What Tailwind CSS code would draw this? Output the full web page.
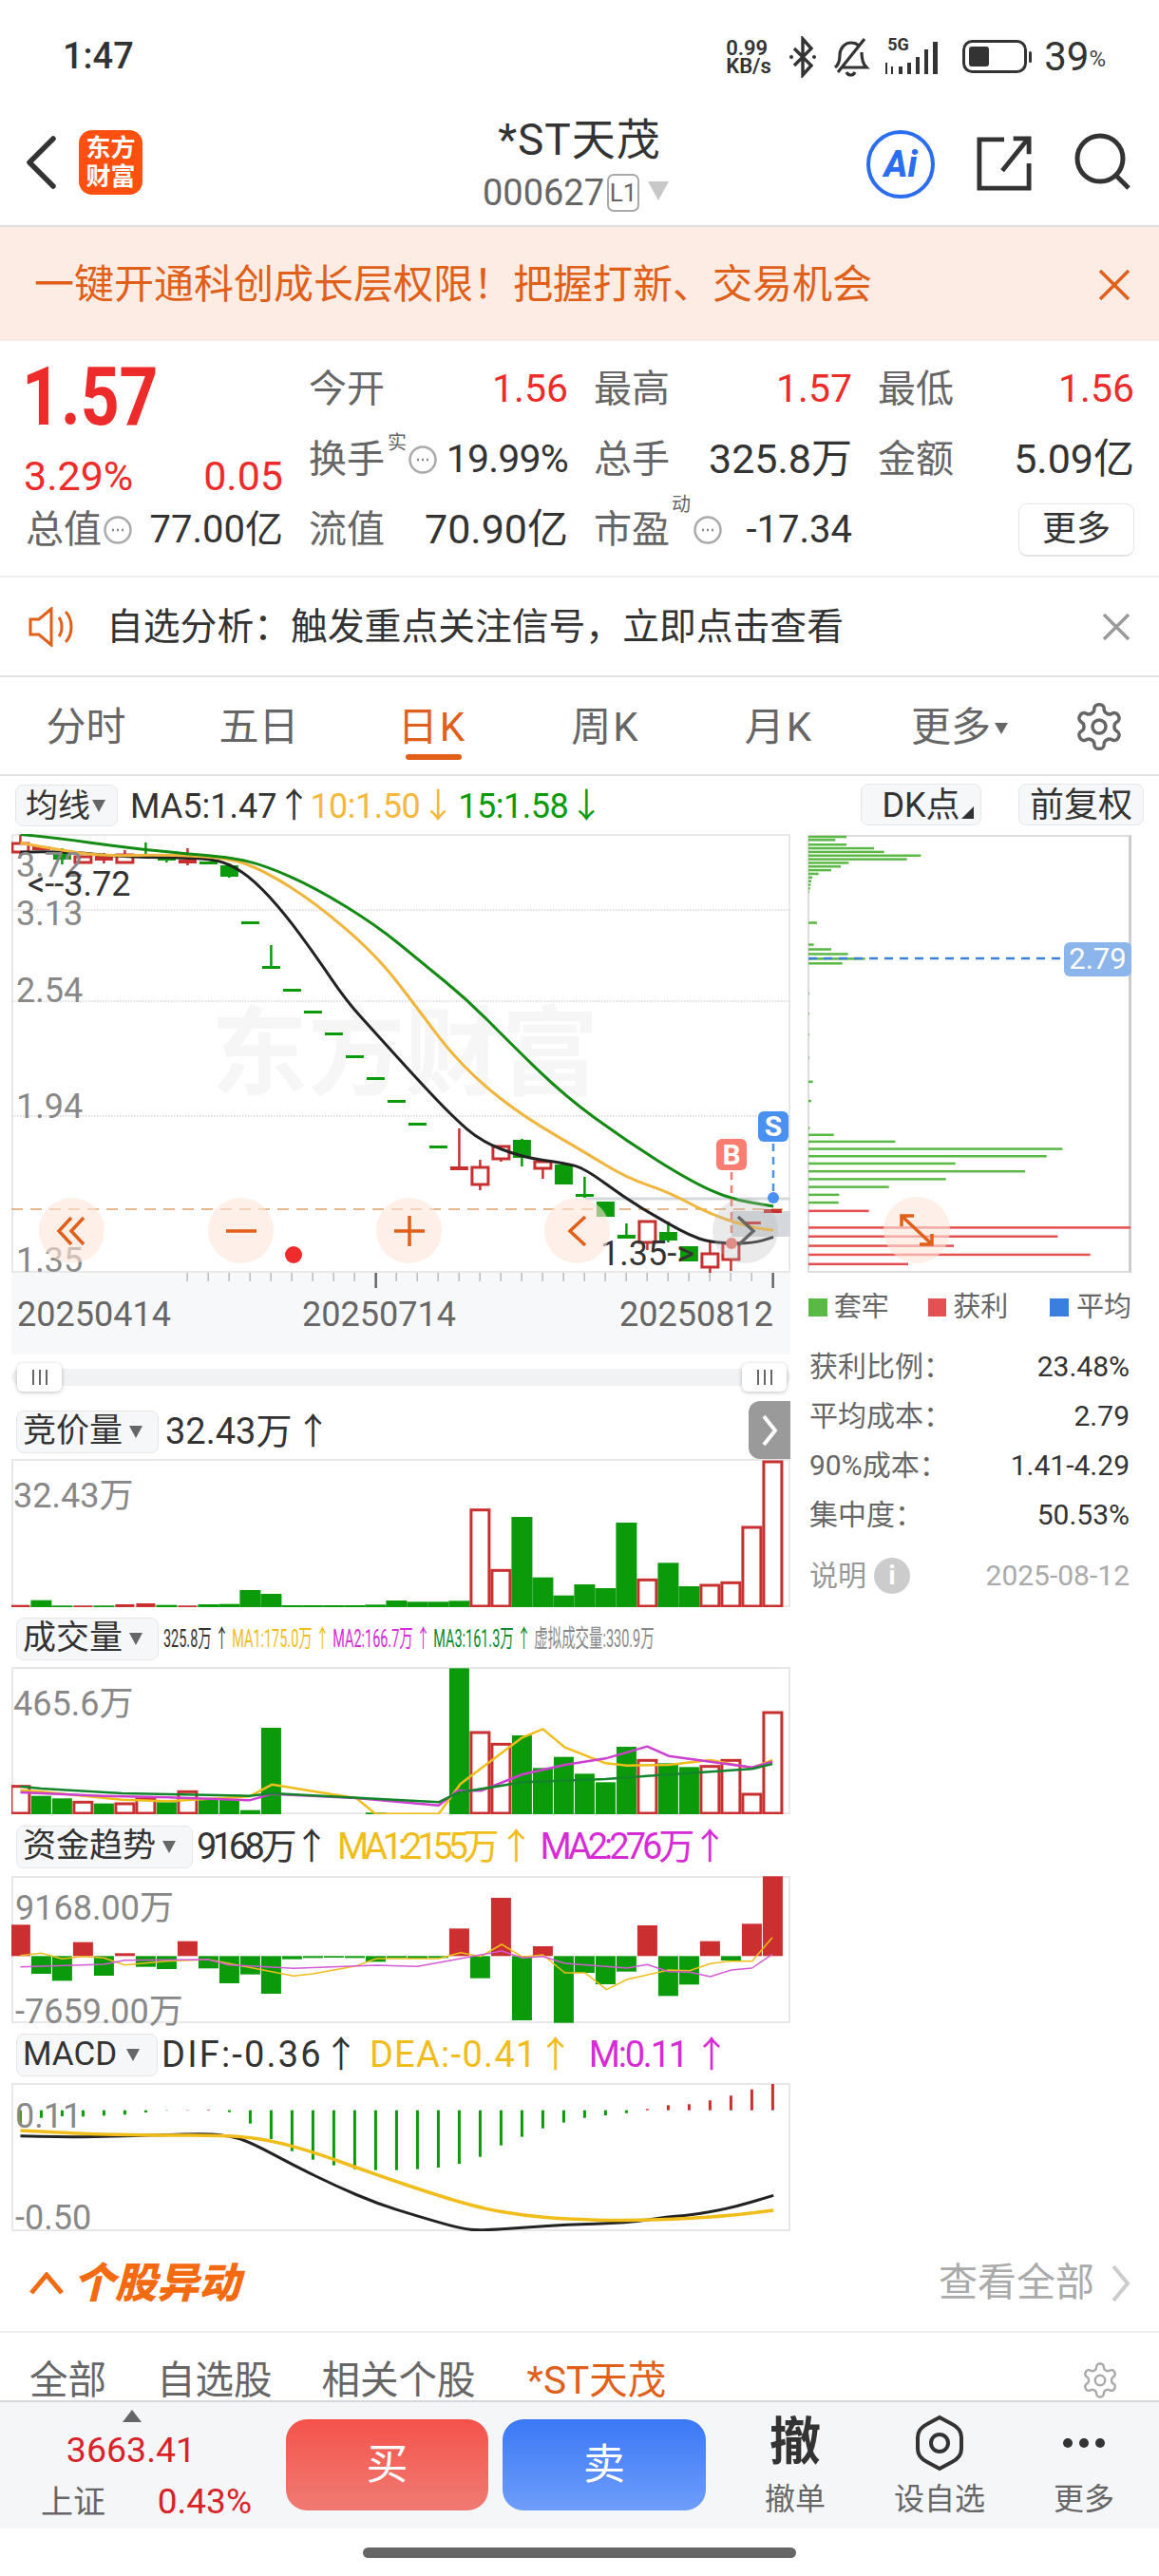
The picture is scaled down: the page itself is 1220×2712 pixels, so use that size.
<!DOCTYPE html>
<html lang="zh-CN">
<head>
<meta charset="UTF-8" />
<title>*ST天茂</title>
<script src="https://cdn.jsdelivr.net/npm/@tailwindcss/browser@4"></script>
</head>
<body class="bg-white text-[#333] font-[Roboto,'Noto_Sans_CJK_SC',sans-serif]">
<div class="w-[1220px] h-[2712px] overflow-hidden relative">

  <!-- status bar -->
  <div class="h-[105px] flex items-start pt-[36px] pl-[66px] pr-[56px] justify-between">
    <span class="text-[38px] leading-[46px] font-medium text-[#333]">1:47</span>
    <div class="flex items-center h-[48px]">
      <div class="text-[22px] leading-[19px] font-semibold w-[54px] text-[#333]">0.99<br>KB/s</div>
      <svg class="ml-[12px]" width="30" height="44" viewBox="0 0 30 44" fill="none" stroke="#333" stroke-width="3.4"><path d="M6 13l18 18-9 10V3l9 10L6 31"/><circle cx="3" cy="22" r="2" fill="#333" stroke="none"/><circle cx="27" cy="22" r="2" fill="#333" stroke="none"/></svg>
      <svg class="ml-[14px]" width="42" height="44" viewBox="0 0 42 44" fill="none" stroke="#333" stroke-width="3.2"><path d="M5 33c4-3 5-7 5-13 0-7 5-13 12-13 3 0 6 1 8 3M33 17c0 7 1 12 5 16H12M17 38c2 4 7 4 9 0M36 3L8 38"/></svg>
      <div class="ml-[14px] relative w-[68px] h-[44px]">
        <span class="absolute left-[4px] top-[-1px] text-[18px] leading-[20px] font-bold">5G</span>
        <svg class="absolute inset-0" width="68" height="44" viewBox="0 0 68 44" fill="#333"><path d="M2 28h2v12H2zM8 32h2v8H8zM16 32h4v8h-4zM25 28h4v12h-4zM34 22h4v18h-4zM43 14h4v26h-4zM52 6h5v34h-5z"/></svg>
      </div>
      <svg class="ml-[15px]" width="74" height="36" viewBox="0 0 74 36"><rect x="1.5" y="1.5" width="65" height="32" rx="9" fill="none" stroke="#333" stroke-width="3"/><rect x="7" y="7" width="21" height="21" rx="3" fill="#333"/><rect x="70" y="12" width="3" height="12" rx="1.5" fill="#333"/></svg>
      <span class="ml-[12px] text-[42px] leading-[46px] text-[#333]">39</span><span class="text-[24px] leading-[46px] mt-[4px] text-[#444]">%</span>
    </div>
  </div>

  <!-- nav -->
  <div class="h-[134px] border-b-2 border-[#e0e0e0] relative flex items-start">
    <svg class="mt-[38px] ml-[27px]" width="32" height="56" viewBox="0 0 32 56" fill="none" stroke="#333" stroke-width="5.5" stroke-linecap="round" stroke-linejoin="round"><path d="M29 3L4 28l25 25"/></svg>
    <div class="mt-[32px] ml-[24px] w-[67px] h-[68px] rounded-[14px] bg-[#ff5011] text-white text-[26px] leading-[30px] font-bold flex flex-col items-center justify-center"><span>东方</span><span>财富</span></div>
    <div class="absolute left-0 right-0 top-0 flex flex-col items-center">
      <div class="text-[46px] leading-[56px] tracking-[1px] mt-[14px] text-[#333]">*ST天茂</div>
      <div class="flex items-center mt-[7px] h-[42px] mr-[8px]">
        <span class="text-[38px] text-[#666]">000627</span>
        <span class="ml-[3px] w-[34px] h-[40px] border-2 border-[#aaa] rounded-[7px] text-[26px] leading-[36px] text-center text-[#666]">L1</span>
        <svg class="ml-[9px] mb-[4px]" width="22" height="20" viewBox="0 0 22 20"><path d="M0 0h22L11 20z" fill="#c8c8c8"/></svg>
      </div>
    </div>
    <div class="ml-auto flex items-start mt-[32px] mr-[30px]">
      <div class="w-[72px] h-[72px] rounded-full border-[4px] border-[#2b6df0] flex items-center justify-center relative mr-[44px] text-[#2b6df0] font-extrabold italic text-[38px] leading-none">Ai</div>
      <svg class="mt-[6px] mr-[44px]" width="58" height="58" viewBox="0 0 60 60" fill="none" stroke="#333" stroke-width="5"><path d="M30 4H3v53h54V30M56 3L28 38M40 3h17v17"/></svg>
      <svg class="mt-[3px]" width="60" height="60" viewBox="0 0 60 60" fill="none" stroke="#333" stroke-width="5"><circle cx="28" cy="27" r="24"/><path d="M45 45l13 13"/></svg>
    </div>
  </div>

  <!-- banner -->
  <div class="h-[120px] bg-[#fdece4] flex items-center pl-[36px] pr-[30px] justify-between pt-[1px]">
    <span class="text-[42px] text-[#e0601a]">一键开通科创成长层权限！把握打新、交易机会</span>
    <svg width="34" height="34" viewBox="0 0 34 34" stroke="#e0601a" stroke-width="3.5"><path d="M2 2l30 30M32 2L2 32"/></svg>
  </div>

  <!-- quote -->
  <div class="h-[249px] border-b-2 border-[#eee] pt-[14px] pl-[27px] grid grid-cols-[271px_273px_272px_270px] gap-x-[27px] grid-rows-[74px_73px_75px]">
    <div class="row-span-2 text-[#ee2b2b] flex flex-col">
      <div class="text-[86px] leading-[84px] font-bold -ml-[4px] mt-[3px] origin-left scale-x-[0.83]">1.57</div>
      <div class="flex justify-between mt-[17px] text-[43px] leading-[48px] -ml-[2px]"><span>3.29%</span><span>0.05</span></div>
    </div>
    <div class="flex items-center justify-between"><span class="text-[40px] text-[#666]">今开</span><span class="text-[41px] text-[#ee2b2b]">1.56</span></div>
    <div class="flex items-center justify-between"><span class="text-[40px] text-[#666]">最高</span><span class="text-[41px] text-[#ee2b2b]">1.57</span></div>
    <div class="flex items-center justify-between"><span class="text-[40px] text-[#666]">最低</span><span class="text-[41px] text-[#ee2b2b]">1.56</span></div>

    <div class="flex items-center relative"><span class="text-[40px] text-[#666]">换手</span><span class="absolute left-[83px] top-[8px] text-[20px] leading-[22px] text-[#666]">实</span>
      <svg class="ml-[25px]" width="30" height="30" viewBox="0 0 30 30" fill="none" stroke="#aaa" stroke-width="2.5"><circle cx="15" cy="15" r="13.5"/><path d="M9 15h2M14 15h2M19 15h2" stroke="#888"/></svg>
      <span class="ml-auto text-[41px] tracking-[-0.8px] text-[#333]">19.99%</span></div>
    <div class="flex items-center justify-between"><span class="text-[40px] text-[#666]">总手</span><span class="text-[43px] text-[#333]">325.8万</span></div>
    <div class="flex items-center justify-between"><span class="text-[40px] text-[#666]">金额</span><span class="text-[43px] text-[#333]">5.09亿</span></div>

    <div class="flex items-center"><span class="text-[40px] text-[#666]">总值</span>
      <svg class="ml-[2px]" width="30" height="30" viewBox="0 0 30 30" fill="none" stroke="#aaa" stroke-width="2.5"><circle cx="15" cy="15" r="13.5"/><path d="M9 15h2M14 15h2M19 15h2" stroke="#888"/></svg>
      <span class="ml-auto text-[40px] text-[#333]">77.00亿</span></div>
    <div class="flex items-center justify-between"><span class="text-[40px] text-[#666]">流值</span><span class="text-[43px] text-[#333]">70.90亿</span></div>
    <div class="flex items-center relative"><span class="text-[40px] text-[#666]">市盈</span><span class="absolute left-[82px] top-[0px] text-[20px] leading-[22px] text-[#666]">动</span>
      <svg class="ml-[25px]" width="30" height="30" viewBox="0 0 30 30" fill="none" stroke="#aaa" stroke-width="2.5"><circle cx="15" cy="15" r="13.5"/><path d="M9 15h2M14 15h2M19 15h2" stroke="#888"/></svg>
      <span class="ml-auto text-[40px] text-[#333]">-17.34</span></div>
    <div class="flex items-center justify-end"><span class="w-[122px] h-[56px] border border-[#e4e4e4] border-b-2 rounded-[9px] text-[36px] leading-[52px] text-center text-[#333]">更多</span></div>
  </div>

  <!-- notice -->
  <div class="h-[105px] border-b-2 border-[#e4e4e4] flex items-center pl-[30px] pr-[30px]">
    <svg width="50" height="42" viewBox="0 0 50 42" fill="none" stroke="#e0601a" stroke-width="3"><path d="M2 13h9L24 2v38L11 29H2zM32 11c4 5 4 15 0 20M39 5c8 8 8 24 0 32"/></svg>
    <span class="ml-[32px] text-[38.8px] pt-[2px] text-[#333]">自选分析：触发重点关注信号，立即点击查看</span>
    <svg class="ml-auto" width="30" height="30" viewBox="0 0 30 30" stroke="#9a9a9a" stroke-width="3.5"><path d="M2 2l26 26M28 2L2 28"/></svg>
  </div>

  <!-- period tabs -->
  <div class="h-[104px] border-b-2 border-[#e4e4e4] relative flex items-center text-[42px] text-[#666] pt-[2px]">
    <span class="w-[181px] text-center">分时</span>
    <span class="w-[187px] text-center -ml-[2px]">五日</span>
    <span class="w-[184px] text-center text-[#e0601a] relative tracking-[2px] -ml-[3px]">日K<span class="absolute left-[64px] top-[60px] w-[59px] h-[6px] rounded-full bg-[#e0601a]"></span></span>
    <span class="w-[181px] text-center tracking-[2px]">周K</span>
    <span class="w-[184px] text-center tracking-[2px]">月K</span>
    <span class="ml-[47px]">更多</span>
    <svg class="ml-[4px] mt-[4px]" width="14" height="14" viewBox="0 0 14 14"><path d="M0 1h14L7 13z" fill="#666"/></svg>
    <svg class="ml-auto mr-[35px]" width="56" height="56" viewBox="0 0 24 24" fill="none" stroke="#666" stroke-width="1.5"><path d="M12.22 2h-.44a2 2 0 0 0-2 2v.18a2 2 0 0 1-1 1.73l-.43.25a2 2 0 0 1-2 0l-.15-.08a2 2 0 0 0-2.73.73l-.22.38a2 2 0 0 0 .73 2.73l.15.1a2 2 0 0 1 1 1.72v.51a2 2 0 0 1-1 1.74l-.15.09a2 2 0 0 0-.73 2.73l.22.38a2 2 0 0 0 2.73.73l.15-.08a2 2 0 0 1 2 0l.43.25a2 2 0 0 1 1 1.73V20a2 2 0 0 0 2 2h.44a2 2 0 0 0 2-2v-.18a2 2 0 0 1 1-1.73l.43-.25a2 2 0 0 1 2 0l.15.08a2 2 0 0 0 2.73-.73l.22-.39a2 2 0 0 0-.73-2.73l-.15-.08a2 2 0 0 1-1-1.74v-.5a2 2 0 0 1 1-1.74l.15-.09a2 2 0 0 0 .73-2.73l-.22-.38a2 2 0 0 0-2.73-.73l-.15.08a2 2 0 0 1-2 0l-.43-.25a2 2 0 0 1-1-1.73V4a2 2 0 0 0-2-2z"/><circle cx="12" cy="12" r="3"/></svg>
  </div>

  <!-- charts -->
  <div class="h-[1533px] flex pl-[12px]">
    <div class="w-[820px] shrink-0 flex flex-col">
      <div class="h-[61px] flex items-start text-[36px] leading-[44px] pt-[10px] whitespace-nowrap">
        <div class="ml-[4px] w-[108px] h-[44px] mt-[-1px] flex items-center pl-[10px] bg-[#f6f7f9] border border-[#e4e6ea] rounded-[8px] text-[34px] text-[#333]">均线<svg class="ml-[2px]" width="14" height="13" viewBox="0 0 14 13"><path d="M0 0h14L7 13z" fill="#666"/></svg></div>
        <span class="ml-[13px] text-[#333]">MA5:1.47</span><span class="inline-flex w-[20px] ml-[8px] justify-center text-[#333]">↑</span>
        <span class="ml-[7px] text-[#f5b83d] tracking-[-0.5px]">10:1.50</span><span class="inline-flex w-[20px] ml-[9px] justify-center text-[#f5b83d]">↓</span>
        <span class="ml-[11px] text-[#0a9a0a] tracking-[-0.5px]">15:1.58</span><span class="inline-flex w-[20px] ml-[9px] justify-center text-[#0a9a0a]">↓</span>
      </div>

      <!-- main k-line panel -->
      <div class="relative h-[462px] border-2 border-[#e8e8e8]">
        <span class="absolute left-[208px] top-[176px] text-[102px] leading-[108px] font-bold text-[#f6f6f6]">东方财富</span>
        <svg id="kline" class="absolute left-[-2px] top-[-2px]" width="820" height="462" viewBox="12 880 820 462"></svg>
        <span class="absolute left-[3px] top-[13px] text-[36px] leading-[36px] text-[#888]">3.72</span>
        <span class="absolute left-[15px] top-[33px] text-[36px] leading-[36px] text-[#333]">&lt;--3.72</span>
        <span class="absolute left-[3px] top-[64px] text-[36px] leading-[36px] text-[#888]">3.13</span>
        <span class="absolute left-[3px] top-[145px] text-[36px] leading-[36px] text-[#888]">2.54</span>
        <span class="absolute left-[3px] top-[267px] text-[36px] leading-[36px] text-[#888]">1.94</span>
        <span class="absolute left-[3px] top-[429px] text-[36px] leading-[36px] text-[#888]">1.35</span>
        <span class="absolute left-[618px] top-[422px] text-[36px] leading-[36px] text-[#333]">1.35-&gt;</span>
        <span class="absolute left-[740px] top-[319px] w-[32px] h-[33px] rounded-[6px] bg-[#f97d70] text-white font-bold text-[30px] leading-[33px] text-center">B</span>
        <span class="absolute left-[784px] top-[290px] w-[32px] h-[32px] rounded-[6px] bg-[#4a90f0] text-white font-bold text-[30px] leading-[32px] text-center">S</span>
        <div class="absolute left-[-2px] right-0 top-[381px]">
          <div class="absolute left-[29px] w-[69px] h-[69px] rounded-full bg-[#fde5d8]/60 flex items-center justify-center"><svg width="34" height="34" viewBox="0 0 34 34" fill="none" stroke="#e0601a" stroke-width="3.5"><path d="M16 3L3 17l13 14M29 3L16 17l13 14"/></svg></div>
          <div class="absolute left-[207px] w-[69px] h-[69px] rounded-full bg-[#fde5d8]/60 flex items-center justify-center"><svg width="34" height="34" viewBox="0 0 34 34" fill="none" stroke="#e0601a" stroke-width="3.5"><path d="M1 17h32"/></svg></div>
          <div class="absolute left-[384px] w-[69px] h-[69px] rounded-full bg-[#fde5d8]/60 flex items-center justify-center"><svg width="34" height="34" viewBox="0 0 34 34" fill="none" stroke="#e0601a" stroke-width="3.5"><path d="M1 17h32M17 1v32"/></svg></div>
          <div class="absolute left-[561px] w-[69px] h-[69px] rounded-full bg-[#fde5d8]/60 flex items-center justify-center"><svg width="34" height="34" viewBox="0 0 34 34" fill="none" stroke="#e0601a" stroke-width="3.5"><path d="M25 2L9 17l16 15"/></svg></div>
          <div class="absolute left-[738px] w-[69px] h-[69px] rounded-full bg-[#bbbbbb]/30 flex items-center justify-center"><svg width="34" height="34" viewBox="0 0 34 34" fill="none" stroke="#666" stroke-width="3.5"><path d="M9 2l16 15L9 32"/></svg></div>
        </div>
      </div>

      <!-- date strip -->
      <div class="h-[86px] bg-[#f7f8fa] relative text-[36px] text-[#666] leading-[36px]">
        <svg class="absolute left-0 top-0" width="820" height="18" id="ticks"></svg>
        <span class="absolute left-[6px] top-[26px]">20250414</span>
        <span class="absolute left-[306px] top-[26px]">20250714</span>
        <span class="absolute left-[640px] top-[26px]">20250812</span>
      </div>

      <!-- range slider -->
      <div class="h-[49px] relative">
        <div class="absolute left-0 right-0 top-[15px] h-[18px] rounded-full bg-[#f1f2f4]"></div>
        <div class="absolute left-[6px] top-[9px] w-[47px] h-[30px] bg-white rounded-[6px] shadow-[0_1px_4px_rgba(0,0,0,0.25)] flex items-center justify-center gap-[5px]"><i class="w-[2px] h-[16px] bg-[#666]"></i><i class="w-[2px] h-[16px] bg-[#666]"></i><i class="w-[2px] h-[16px] bg-[#666]"></i></div>
        <div class="absolute left-[769px] top-[9px] w-[47px] h-[30px] bg-white rounded-[6px] shadow-[0_1px_4px_rgba(0,0,0,0.25)] flex items-center justify-center gap-[5px]"><i class="w-[2px] h-[16px] bg-[#666]"></i><i class="w-[2px] h-[16px] bg-[#666]"></i><i class="w-[2px] h-[16px] bg-[#666]"></i></div>
      </div>

      <!-- 竞价量 -->
      <div class="h-[61px] relative flex items-center text-[38px] whitespace-nowrap pt-[3px]">
        <div class="ml-[5px] shrink-0 w-[150px] h-[45px] flex items-center pl-[6px] bg-[#f6f7f9] border border-[#e4e6ea] rounded-[8px] text-[35px] text-[#333]">竞价量<svg class="ml-[7px]" width="14" height="13" viewBox="0 0 14 13"><path d="M0 0h14L7 13z" fill="#666"/></svg></div>
        <span class="ml-[7px] text-[#333]">32.43万</span><span class="inline-flex w-[20px] ml-[12px] justify-center text-[#333]">↑</span>
        <div class="absolute right-0 top-0 bottom-0 w-[44px] rounded-l-[12px] bg-[#9a9a9a] flex items-center justify-center"><svg width="18" height="34" viewBox="0 0 18 34" fill="none" stroke="#fff" stroke-width="4"><path d="M3 2l12 15L3 32"/></svg></div>
      </div>
      <div class="relative h-[156px] border-2 border-[#e8e8e8]">
        <svg id="auction" class="absolute left-[-2px] top-[-2px]" width="820" height="156" viewBox="12 1538 820 156"></svg>
        <span class="absolute left-[0px] top-[19px] text-[36px] leading-[36px] text-[#888]">32.43万</span>
      </div>

      <!-- 成交量 -->
      <div class="h-[63px] flex items-center whitespace-nowrap pt-[3px]">
        <div class="ml-[5px] shrink-0 w-[150px] h-[45px] flex items-center pl-[6px] bg-[#f6f7f9] border border-[#e4e6ea] rounded-[8px] text-[35px] text-[#333]">成交量<svg class="ml-[7px]" width="14" height="13" viewBox="0 0 14 13"><path d="M0 0h14L7 13z" fill="#666"/></svg></div>
        <div class="ml-[5px] text-[26px] origin-left scale-x-[0.555]">
          <span class="text-[#333]">325.8万 ↑</span>
          <span class="text-[#f0bd1b]">MA1:175.0万 ↑</span>
          <span class="text-[#d62bd6]">MA2:166.7万 ↑</span>
          <span class="text-[#0a8a2a]">MA3:161.3万 ↑</span>
          <span class="text-[#888]">虚拟成交量:330.9万</span>
        </div>
      </div>
      <div class="relative h-[155px] border-2 border-[#e8e8e8]">
        <svg id="volume" class="absolute left-[-2px] top-[-2px]" width="820" height="155" viewBox="12 1757 820 155"></svg>
        <span class="absolute left-[0px] top-[19px] text-[36px] leading-[36px] text-[#888]">465.6万</span>
      </div>

      <!-- 资金趋势 -->
      <div class="h-[65px] flex items-center text-[38px] whitespace-nowrap pt-[3px]">
        <div class="ml-[5px] shrink-0 w-[186px] h-[45px] flex items-center pl-[6px] bg-[#f6f7f9] border border-[#e4e6ea] rounded-[8px] text-[35px] text-[#333]">资金趋势<svg class="ml-[7px]" width="14" height="13" viewBox="0 0 14 13"><path d="M0 0h14L7 13z" fill="#666"/></svg></div>
        <span class="ml-[4px] text-[#333] tracking-[-4.5px]">9168万</span><span class="inline-flex w-[20px] ml-[10px] justify-center text-[#333]">↑</span>
        <span class="ml-[17px] text-[#f0bd1b] tracking-[-5.2px]">MA1:2155万</span><span class="inline-flex w-[20px] ml-[13px] justify-center text-[#f0bd1b]">↑</span>
        <span class="ml-[15px] text-[#d62bd6] tracking-[-4px]">MA2:276万</span><span class="inline-flex w-[20px] ml-[10px] justify-center text-[#d62bd6]">↑</span>
      </div>
      <div class="relative h-[155px] border-2 border-[#e8e8e8]">
        <svg id="flow" class="absolute left-[-2px] top-[-2px]" width="820" height="155" viewBox="12 1977 820 155"></svg>
        <span class="absolute left-[2px] top-[14px] text-[36px] leading-[36px] text-[#888]">9168.00万</span>
        <span class="absolute left-[2px] top-[123px] text-[36px] leading-[36px] text-[#888]">-7659.00万</span>
      </div>

      <!-- MACD -->
      <div class="h-[63px] flex items-center text-[38px] whitespace-nowrap pt-[3px]">
        <div class="ml-[5px] shrink-0 w-[149px] h-[45px] flex items-center pl-[6px] bg-[#f6f7f9] border border-[#e4e6ea] rounded-[8px] text-[35px] text-[#333]">MACD<svg class="ml-[10px]" width="14" height="13" viewBox="0 0 14 13"><path d="M0 0h14L7 13z" fill="#666"/></svg></div>
        <span class="ml-[4px] text-[#333] tracking-[2.2px]">DIF:-0.36</span><span class="inline-flex w-[20px] ml-[9px] justify-center text-[#333]">↑</span>
        <span class="ml-[20px] text-[#f0bd1b] tracking-[1.3px]">DEA:-0.41</span><span class="inline-flex w-[20px] ml-[9px] justify-center text-[#f0bd1b]">↑</span>
        <span class="ml-[25px] text-[#d62bd6] tracking-[-2.2px]">M:0.11</span><span class="inline-flex w-[20px] ml-[16px] justify-center text-[#d62bd6]">↑</span>
      </div>
      <div class="relative h-[156px] border-2 border-[#e8e8e8]">
        <svg id="macd" class="absolute left-[-2px] top-[-2px]" width="820" height="156" viewBox="12 2195 820 156"></svg>
        <span class="absolute left-[2px] top-[15px] text-[36px] leading-[36px] text-[#888]">0.11</span>
        <span class="absolute left-[2px] top-[122px] text-[36px] leading-[36px] text-[#888]">-0.50</span>
      </div>
    </div>

    <!-- chip distribution -->
    <div class="w-[354px] ml-[18px] shrink-0 flex flex-col">
      <div class="h-[62px] flex items-start pt-[8px] text-[36px] text-[#333]">
        <div class="ml-[56px] w-[127px] h-[44px] bg-[#f6f7f9] border border-[#e4e6ea] rounded-[8px] flex items-center justify-center relative pt-[2px]">DK点<svg class="absolute right-[7px] bottom-[6px]" width="13" height="13" viewBox="0 0 13 13"><path d="M13 0v13H0z" fill="#333"/></svg></div>
        <div class="ml-[39px] w-[132px] h-[44px] bg-[#f6f7f9] border border-[#e4e6ea] rounded-[8px] flex items-center justify-center pt-[2px]">前复权</div>
      </div>
      <div class="relative w-[341px] h-[461px] border-2 border-[#ddd] border-r-[3px] border-r-[#ccc]">
        <svg id="chips" class="absolute left-[-2px] top-[-2px]" width="341" height="461" viewBox="850 882 341 461"></svg>
        <span class="absolute left-[268px] top-[111px] w-[71px] h-[36px] rounded-[6px] bg-[#8cb5ec] text-white text-[31px] leading-[36px] text-center">2.79</span>
        <div class="absolute left-[78px] top-[379px] w-[70px] h-[70px] rounded-full bg-[#fde5d8]/60 flex items-center justify-center"><svg width="36" height="34" viewBox="0 0 36 34" fill="none" stroke="#e0601a" stroke-width="3.5"><path d="M2 13V2h13M2 2l32 30M34 21v11H21"/></svg></div>
      </div>
      <div class="w-[341px] flex items-center mt-[20px] text-[29px] leading-[32px] text-[#666] whitespace-nowrap">
        <i class="ml-[1px] w-[20px] h-[19px] bg-[#5ab945]"></i><span class="ml-[7px]">套牢</span>
        <i class="ml-[41px] w-[20px] h-[19px] bg-[#e55050]"></i><span class="ml-[7px]">获利</span>
        <i class="ml-[44px] w-[20px] h-[19px] bg-[#3a7fdf]"></i><span class="ml-[8px]">平均</span>
      </div>
      <div class="w-[341px] mt-[29px] flex flex-col gap-[16px] text-[30px] leading-[36px] pl-[2px] pr-[2px]">
        <div class="flex justify-between"><span class="text-[#666]">获利比例：</span><span class="text-[#333]">23.48%</span></div>
        <div class="flex justify-between"><span class="text-[#666]">平均成本：</span><span class="text-[#333]">2.79</span></div>
        <div class="flex justify-between"><span class="text-[#666]">90%成本：</span><span class="text-[#333]">1.41-4.29</span></div>
        <div class="flex justify-between"><span class="text-[#666]">集中度：</span><span class="text-[#333]">50.53%</span></div>
        <div class="flex items-center justify-between mt-[11px] text-[#aaa]"><span class="flex items-center text-[#999]">说明<span class="ml-[8px] w-[38px] h-[38px] rounded-full bg-[#ccc] text-white text-[28px] font-bold leading-[38px] text-center">i</span></span><span>2025-08-12</span></div>
      </div>
    </div>
  </div>

  <!-- 个股异动 -->
  <div class="h-[106px] border-b-2 border-[#eee] flex items-center pl-[31px] pr-[30px] pt-[3px]">
    <svg width="36" height="24" viewBox="0 0 36 24" fill="none" stroke="#f36a10" stroke-width="5"><path d="M2 22L18 3l16 19"/></svg>
    <span class="ml-[10px] text-[44px] font-black italic text-[#f36a10]">个股异动</span>
    <span class="ml-auto text-[41px] text-[#aaa]">查看全部</span>
    <svg class="ml-[18px]" width="20" height="40" viewBox="0 0 20 40" fill="none" stroke="#ccc" stroke-width="4"><path d="M2 2l15 18L2 38"/></svg>
  </div>

  <!-- news tabs -->
  <div class="h-[71px] flex items-start pt-[29px] text-[40.5px] leading-[42px] text-[#666] pl-[31px] relative">
    <span>全部</span>
    <span class="ml-[53px]">自选股</span>
    <span class="ml-[52px]">相关个股</span>
    <span class="ml-[54px] text-[#e0601a]">*ST天茂</span>
    <svg class="absolute left-[1137px] top-[29px]" width="42" height="42" viewBox="0 0 24 24" fill="none" stroke="#aaa" stroke-width="1.4"><path d="M12.22 2h-.44a2 2 0 0 0-2 2v.18a2 2 0 0 1-1 1.73l-.43.25a2 2 0 0 1-2 0l-.15-.08a2 2 0 0 0-2.73.73l-.22.38a2 2 0 0 0 .73 2.73l.15.1a2 2 0 0 1 1 1.72v.51a2 2 0 0 1-1 1.74l-.15.09a2 2 0 0 0-.73 2.73l.22.38a2 2 0 0 0 2.73.73l.15-.08a2 2 0 0 1 2 0l.43.25a2 2 0 0 1 1 1.73V20a2 2 0 0 0 2 2h.44a2 2 0 0 0 2-2v-.18a2 2 0 0 1 1-1.73l.43-.25a2 2 0 0 1 2 0l.15.08a2 2 0 0 0 2.73-.73l.22-.39a2 2 0 0 0-.73-2.73l-.15-.08a2 2 0 0 1-1-1.74v-.5a2 2 0 0 1 1-1.74l.15-.09a2 2 0 0 0 .73-2.73l-.22-.38a2 2 0 0 0-2.73-.73l-.15.08a2 2 0 0 1-2 0l-.43-.25a2 2 0 0 1-1-1.73V4a2 2 0 0 0-2-2z"/><circle cx="12" cy="12" r="3"/></svg>
  </div>

  <!-- bottom bar -->
  <div class="h-[135px] bg-[#f5f6f8] border-t-2 border-[#d5d8de] flex relative">
    <div class="w-[301px] pl-[43px] flex flex-col">
      <svg class="ml-[86px] mt-[8px]" width="20" height="13" viewBox="0 0 20 13"><path d="M10 0l10 13H0z" fill="#666"/></svg>
      <div class="w-[190px] text-center text-[37.5px] leading-[44px] mt-[7px] text-[#d8232a]">3663.41</div>
      <div class="w-[222px] flex justify-between mt-[11px] leading-[44px]"><span class="text-[34px] text-[#666]">上证</span><span class="text-[37px] text-[#d8232a]">0.43%</span></div>
    </div>
    <div class="w-[213px] h-[96px] mt-[18px] rounded-[22px] bg-linear-to-b from-[#f4524a] to-[#ef7a73] text-white text-[44px] flex items-center justify-center">买</div>
    <div class="ml-[15px] w-[214px] h-[96px] mt-[18px] rounded-[22px] bg-linear-to-b from-[#3a78f5] to-[#6e9dfb] text-white text-[44px] flex items-center justify-center">卖</div>
    <div class="ml-[18px] w-[152px] flex flex-col items-center">
      <span class="h-[70px] mt-[8px] text-[54px] leading-[70px] font-bold text-[#333]">撤</span>
      <span class="text-[32px] leading-[36px] mt-[6px] text-[#666]">撤单</span>
    </div>
    <div class="w-[152px] flex flex-col items-center">
      <span class="h-[70px] mt-[8px] flex items-center"><svg width="52" height="60" viewBox="0 0 52 60" fill="none" stroke="#333" stroke-width="4"><path d="M26 3l13 7c6 3 10 8 10 14v12c0 6-4 11-10 14l-13 7-13-7C7 47 3 42 3 36V24c0-6 4-11 10-14z"/><circle cx="26" cy="30" r="9"/></svg></span>
      <span class="text-[32px] leading-[36px] mt-[6px] text-[#666]">设自选</span>
    </div>
    <div class="w-[152px] flex flex-col items-center">
      <span class="h-[70px] mt-[8px] flex items-center"><svg width="46" height="12" viewBox="0 0 46 12" fill="#333"><circle cx="6" cy="6" r="5"/><circle cx="23" cy="6" r="5"/><circle cx="40" cy="6" r="5"/></svg></span>
      <span class="text-[32px] leading-[36px] mt-[6px] text-[#666]">更多</span>
    </div>
  </div>

  <!-- home indicator -->
  <div class="mt-[20px] mx-auto w-[456px] h-[11px] rounded-full bg-[#666]"></div>
</div>

<script>
  const GREEN = '#0a9a0a', RED = '#c8302f'
  const cx = i => 21.4 + 22 * i
  const zx = v => v / 1.867

  // draw a polyline, optionally smoothed through midpoints
  function line(pts, color, width, smooth) {
    let d = 'M' + pts[0].join(' ')
    if (smooth) {
      for (let i = 1; i < pts.length - 1; i++) {
        const mx = (pts[i][0] + pts[i + 1][0]) / 2, my = (pts[i][1] + pts[i + 1][1]) / 2
        d += `Q${pts[i][0]} ${pts[i][1]} ${mx} ${my}`
      }
      d += 'L' + pts[pts.length - 1].join(' ')
    } else {
      d += pts.slice(1).map(p => 'L' + p.join(' ')).join('')
    }
    return `<path d="${d}" fill="none" stroke="${color}" stroke-width="${width}" stroke-linejoin="round"/>`
  }
  function rect(x, y, w, h, fill) { return `<rect x="${x}" y="${y}" width="${w}" height="${h}" fill="${fill}"/>` }
  function hollow(x, y, w, h) { return `<rect x="${x}" y="${y}" width="${w}" height="${h}" fill="#fff" stroke="${RED}" stroke-width="3"/>` }

  // main chart: [type, top, bottom, wickTop, wickBottom]  h=hollow red, r=solid red, g=solid green
  const candles = [
    ['h',889,900,881,902],['r',893,897],['g',899,907,895,912],['h',903,911],['r',903,908,900,911],['h',901,911,897,911],
    ['g',901,904,889,905],['g',906,908,901,910],['r',907,911,895,913],['g',909,912],['g',913,925,911,926],
    ['g',972,975],['g',1019,1022,997,1022],['g',1043,1046],['g',1066,1069],['g',1089,1092],['g',1113,1116],['g',1136,1139],
    ['g',1160,1163],['g',1184,1187],['g',1208,1211],['r',1230,1234,1190,1234],['h',1230,1250,1223,1255],['h',1208,1223,1208,1225],
    ['g',1202,1221,1201,1230],['h',1224,1233,1224,1243],['g',1228,1249],['g',1259,1262,1241,1263],['g',1267,1283],
    ['g',1302,1306,1290,1306],['h',1287,1311,1287,1318],['g',1299,1308,1288,1310],['g',1314,1330],['h',1321,1337,1310,1343],
    ['h',1310,1329,1310,1340],['r',1288,1291],['r',1275,1279]
  ]
  const maps = arr => arr.map(p => [zx(p[0]), 830 + p[1] / 2.53])
  let k = ''
  ;[960, 1056, 1177].forEach(y => k += `<path d="M12 ${y}H832" stroke="#d8d8d8" stroke-width="1.5" stroke-dasharray="1.5 1.5"/>`)
  k += `<path d="M12 1275H832" stroke="#e5b98e" stroke-width="2" stroke-dasharray="12 8"/>`
  k += `<path d="M616 1264H832" stroke="#d5d8dc" stroke-width="3"/>`
  k += rect(770, 1277, 62, 27, '#d5d8dc')
  candles.forEach((c, i) => {
    const x = cx(i), col = c[0] == 'g' ? GREEN : RED
    if (c[3]) k += rect(x - 1.25, c[3], 2.5, c[4] - c[3], col)
    if (c[0] == 'h') k += hollow(x - 8.5, c[1] + 1, 17, c[2] - c[1] - 2)
    else k += rect(x - 9.5, c[1], 19, c[2] - c[1], col)
  })
  k += line(maps([[40,175],[120,172],[250,188],[400,190],[450,205],[500,250],[560,340],[620,450],[680,570],[740,660],[820,780],[890,880],[945,945],[1027,988],[1110,1003],[1150,1018],[1232,1100],[1314,1165],[1355,1195],[1396,1215],[1478,1218],[1520,1200]]), '#222', 3, true)
  k += line(maps([[40,150],[120,170],[200,185],[330,182],[450,190],[520,225],[620,310],[740,450],[820,590],[880,700],[945,790],[1030,880],[1150,975],[1232,1043],[1314,1080],[1396,1140],[1478,1175],[1520,1182]]), '#f2b53c', 3, true)
  k += line(maps([[40,128],[100,135],[250,163],[370,180],[450,188],[520,210],[620,270],[740,370],[830,470],[920,570],[1000,680],[1110,825],[1232,945],[1355,1050],[1437,1100],[1520,1118]]), '#138a13', 3, true)
  k += `<path d="M770 1236V1308" stroke="#f07a70" stroke-width="2.5" stroke-dasharray="8 6"/><circle cx="770" cy="1311" r="6" fill="#f07a70"/>`
  k += `<path d="M814 1206V1258" stroke="#4a90f0" stroke-width="2.5" stroke-dasharray="8 6"/><circle cx="814" cy="1263" r="6" fill="#4a90f0"/>`
  k += `<ellipse cx="309" cy="1323" rx="9" ry="9" fill="#f02b2b"/>`
  document.getElementById('kline').innerHTML = k

  // ticks below the chart (svg starts at x=12, y=1342)
  let t = ''
  for (let i = 8; i <= 36; i++) {
    const x = cx(i) - 12, big = i == 17 || i == 36
    t += rect(x - 1, 0, big ? 2.5 : 1.5, big ? 16 : 9, big ? '#666' : '#bbb')
  }
  document.getElementById('ticks').innerHTML = t

  // zoom-space y values of the lower panels
  const y5 = v => 1430 + v / 3, y6 = v => 1900 + v / 3

  // auction volume
  const aucT = [785,770,787,787,787,783,780,785,787,783,782,738,750,786,786,786,786,784,771,775,775,772,482,673,507,698,755,720,732,525,703,652,726,720,712,537,330]
  const barColor = ['r','g','g','r','g','r','r','g','r','g','g','g','g','g','g','g','g','g','g','g','g','g','r','r','g','g','g','g','g','g','r','g','g','r','r','r','r']
  let a = ''
  aucT.forEach((v, i) => {
    const top = y5(v), x = cx(i), b = 1694
    if (barColor[i] == 'g') a += rect(x - 11, top, 22, b - top, GREEN)
    else if (b - top < 6) a += rect(x - 10, top, 20, b - top, RED)
    else a += hollow(x - 9.5, top + 1, 19, b - top - 2)
  })
  document.getElementById('auction').innerHTML = a

  // volume
  const volT = [1355,1388,1396,1405,1412,1410,1395,1408,1372,1398,1398,1433,1173,1446,1446,1446,1446,1441,1446,1446,1446,985,1185,1222,1197,1300,1265,1318,1345,1233,1273,1285,1297,1292,1273,1380,1122]
  let v = ''
  volT.forEach((top0, i) => {
    const top = y5(top0), x = cx(i), b = 1912
    if (barColor[i] == 'g') v += rect(x - 10.5, top, 21, b - top, GREEN)
    else v += hollow(x - 9.5, top + 1, 19, b - top - 2)
  })
  const m5 = arr => arr.map(p => [zx(p[0]), y5(p[1])])
  v += line(m5([[40,1370],[81,1375],[145,1385],[240,1400],[330,1405],[490,1390],[535,1352],[620,1375],[700,1395],[738,1445],[862,1445],[905,1350],[1025,1205],[1067,1177],[1110,1235],[1190,1285],[1232,1292],[1314,1290],[1396,1275],[1478,1300],[1518,1275]]), '#f0bd1b', 2.5)
  v += line(m5([[40,1377],[200,1388],[330,1393],[490,1402],[535,1382],[700,1395],[862,1418],[900,1372],[945,1372],[1027,1320],[1110,1290],[1190,1270],[1272,1232],[1314,1262],[1396,1280],[1478,1298],[1518,1280]]), '#cc3fd0', 2.5)
  v += line(m5([[40,1358],[81,1365],[240,1380],[490,1388],[535,1380],[862,1408],[900,1378],[1027,1345],[1190,1335],[1272,1325],[1396,1312],[1478,1303],[1518,1287]]), '#12852a', 2.5)
  document.getElementById('volume').innerHTML = v

  // capital flow
  const flow = [385,540,562,440,546,475,518,525,437,523,570,542,603,494,490,489,490,502,490,492,490,397,554,300,687,453,695,537,573,533,387,610,574,437,498,382,232]
  let f = ''
  flow.forEach((val, i) => {
    const z = y6(484), e = y6(val), x = cx(i)
    f += rect(x - 10.5, Math.min(z, e), 21, Math.abs(e - z), val < 484 ? '#cc2f2f' : GREEN)
  })
  const m6 = arr => arr.map(p => [zx(p[0]), y6(p[1])])
  f += line(m6([[40,482],[81,475],[122,493],[163,485],[204,490],[245,512],[327,500],[409,495],[490,520],[577,547],[615,540],[700,515],[740,492],[862,492],[905,473],[945,485],[986,447],[1027,487],[1067,480],[1110,537],[1150,537],[1192,590],[1232,558],[1314,528],[1355,530],[1396,508],[1437,500],[1478,500],[1518,425]]), '#f0bd1b', 1.5)
  f += line(m6([[40,518],[204,510],[245,497],[409,495],[450,512],[577,523],[740,513],[820,517],[905,492],[986,468],[1027,490],[1067,485],[1110,507],[1190,517],[1232,522],[1272,511],[1314,533],[1355,535],[1396,549],[1437,528],[1478,522],[1518,478]]), '#d45ad6', 1.5)
  document.getElementById('flow').innerHTML = f

  // macd
  const hist = [1015,995,990,991,988,985,978,972,970,969,977,1013,1062,1100,1127,1145,1157,1160,1160,1157,1152,1140,1118,1082,1055,1028,1010,995,987,980,967,955,952,940,925,905,888]
  let m = ''
  hist.forEach((val, i) => {
    const z = y6(971), e = y6(val)
    m += rect(cx(i) - 1.5, Math.min(z, e), 3, Math.abs(e - z), val < 971 ? RED : GREEN)
  })
  m += line(m6([[40,1052],[122,1055],[204,1055],[286,1050],[409,1045],[450,1052],[490,1070],[577,1145],[660,1210],[740,1265],[820,1305],[905,1345],[945,1351],[1027,1342],[1110,1332],[1232,1327],[1314,1307],[1355,1303],[1437,1280],[1520,1240]]), '#222', 3, true)
  m += line(m6([[40,1035],[122,1042],[204,1047],[300,1050],[450,1050],[530,1065],[620,1105],[740,1175],[860,1240],[945,1280],[1027,1303],[1110,1315],[1232,1320],[1355,1313],[1437,1303],[1520,1287]]), '#f0bd1b', 3.5, true)
  document.getElementById('macd').innerHTML = m

  // chips: [y in zoom px, bar end in zoom px]
  const greens = [[98,153],[104,118],[113,153],[120,240],[127,272],[134,388],[141,344],[148,160],[155,135],[162,105],[169,65],[176,45],[183,42],[190,40],[197,38],[204,35],[263,60],[305,50],[314,105],[323,158],[332,212],[341,140],[398,35],[437,35],[478,35],[522,35],[568,47],[605,42],[657,37],[670,113],[683,307],[697,835],[711,785],[725,497],[740,717],[755,467],[770,287],[785,130],[800,128]]
  const reds = [[816,224],[848,1050],[865,820],[883,492],[900,923],[918,348]]
  const chipBar = (p, col) => rect(851, 830 + p[0] / 1.823 - 1, p[1] / 3 - 11, 2.5, col)
  let c = ''
  greens.forEach(p => c += chipBar(p, '#5ab945'))
  reds.forEach(p => c += chipBar(p, '#e55050'))
  c += `<path d="M851 1012H1120" stroke="#3a7fdf" stroke-width="2.5" stroke-dasharray="9 7"/>`
  document.getElementById('chips').innerHTML = c
</script>
</body>
</html>
